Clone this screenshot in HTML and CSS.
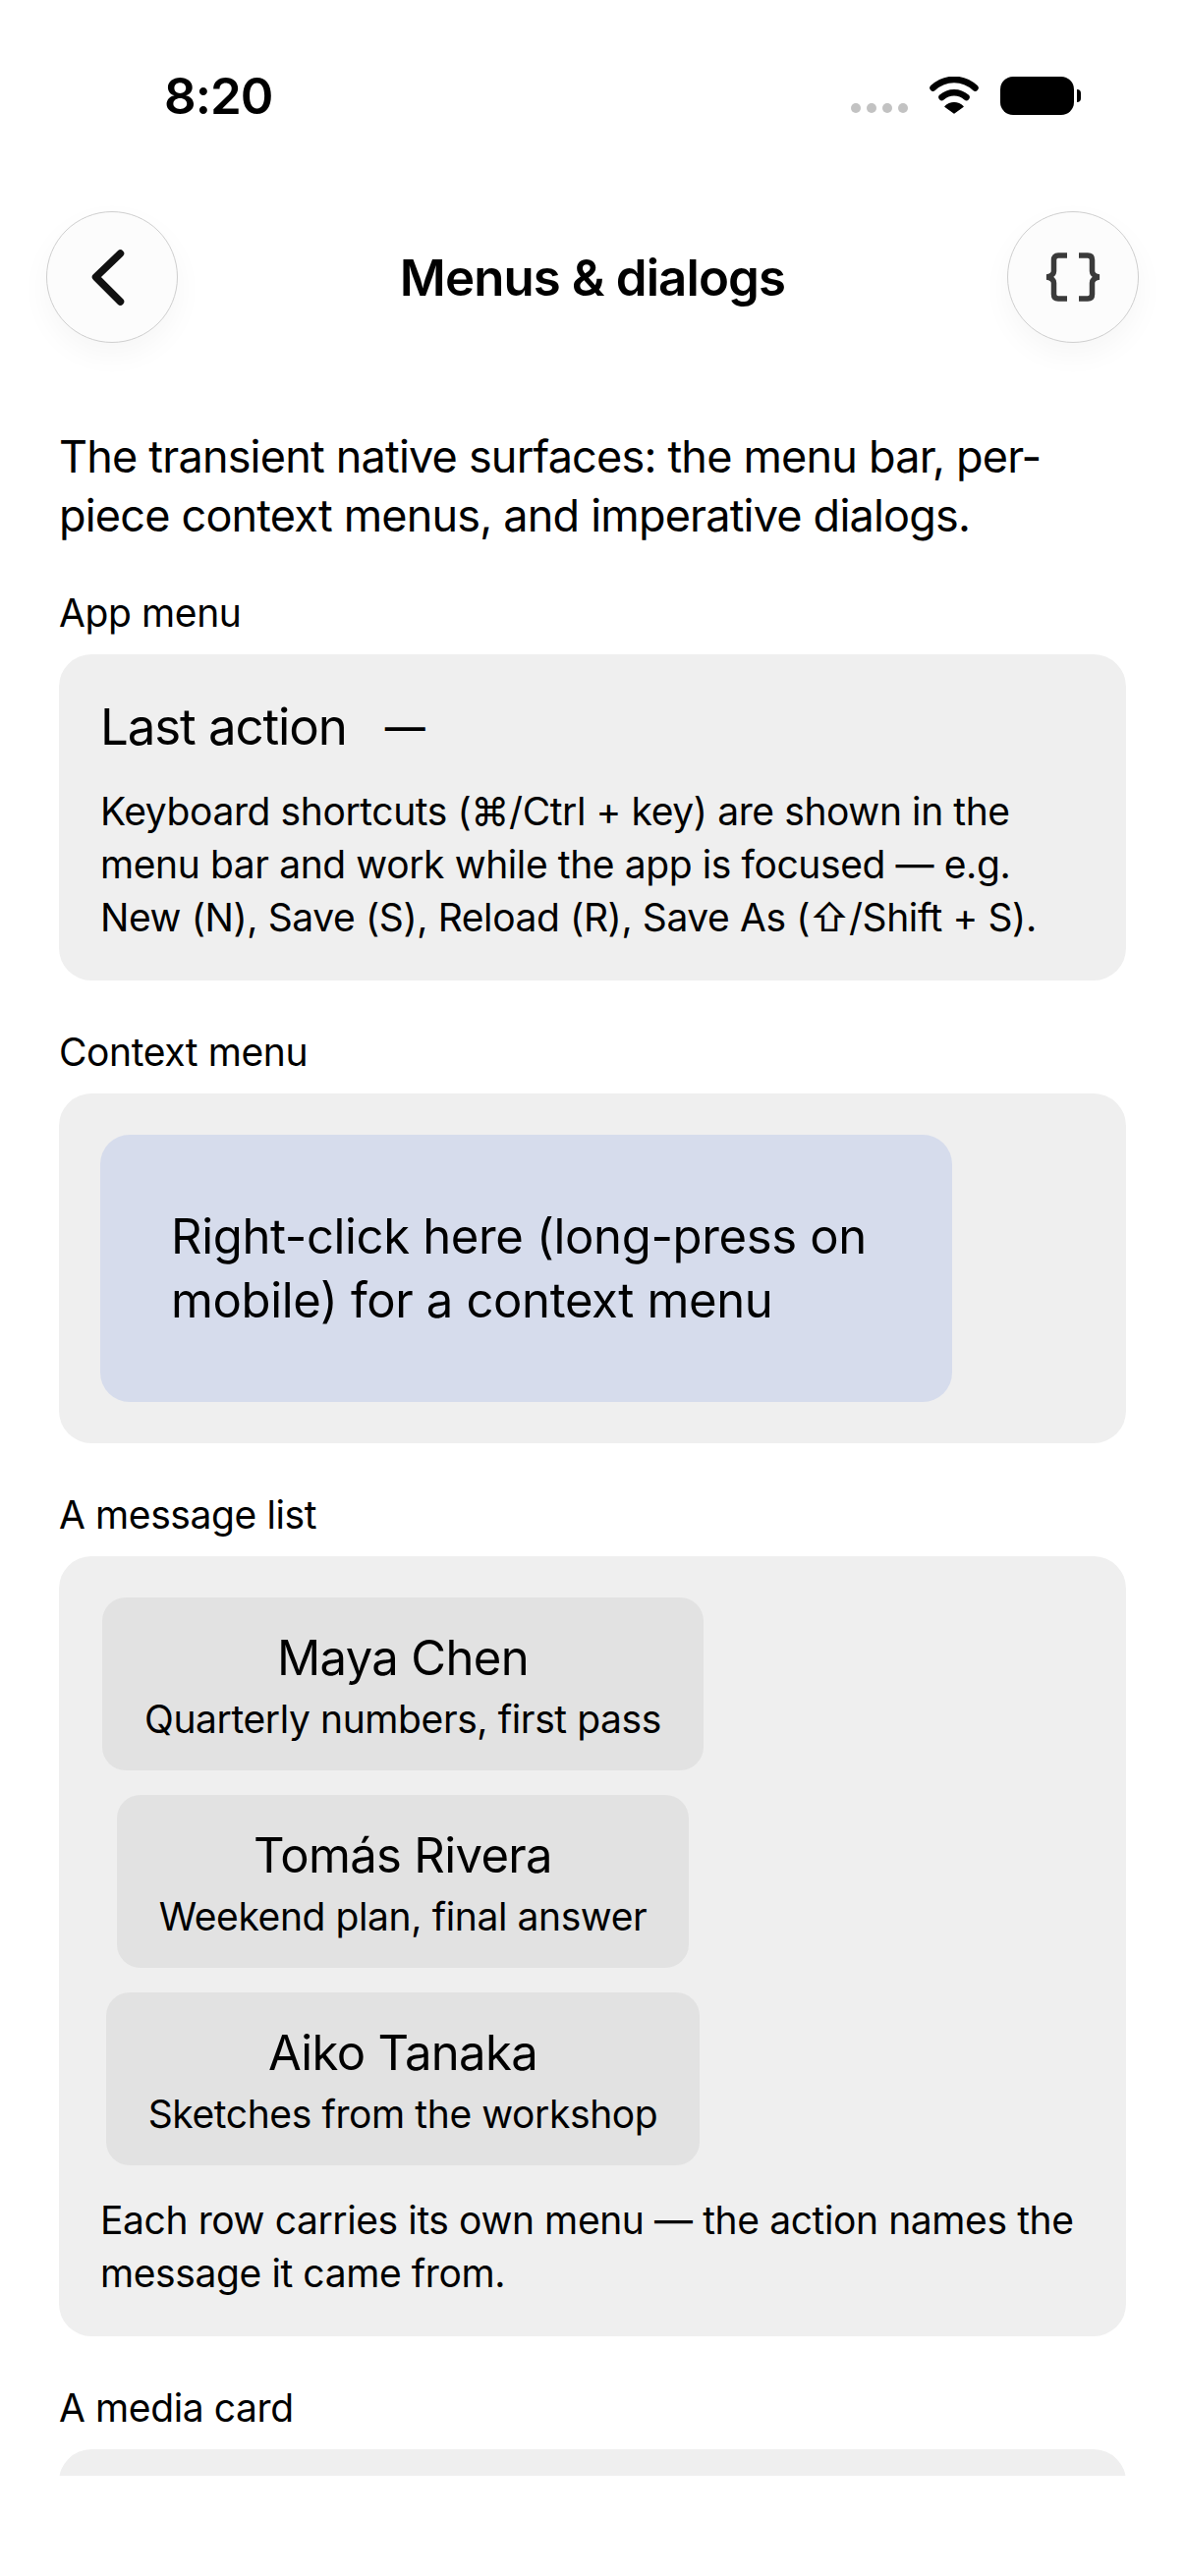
FILE: index.html
```html
<!DOCTYPE html>
<html lang="en">
  <head>
    <meta charset="utf-8" />
    <title>Menus &amp; dialogs</title>
    <link rel="stylesheet" href="styles.css">
  </head>

  <body>
    <div class="phone">
      <div class="status-bar">
        <span class="clock">8:20</span>
        <div class="status-icons">
          <div class="signal"><i></i><i></i><i></i><i></i></div>
          <svg class="wifi" width="50" height="38" viewBox="0 0 50 38">
            <path d="M3.500 11.500C16 0 34 0 46.500 11.500" fill="none" stroke="#000" stroke-width="6.500" stroke-linecap="round" />
            <path d="M12.500 21C19.500 14.700 30.500 14.700 37.500 21" fill="none" stroke="#000" stroke-width="6.500" stroke-linecap="round" />
            <path d="M25 37L16 30.500C21 25.500 29 25.500 34 30.500Z" fill="#000" stroke="#000" stroke-width="1.500" stroke-linejoin="round" />
          </svg>
          <div class="battery"><div class="battery-body"></div><div class="battery-cap"></div></div>
        </div>
      </div>

      <header class="nav">
        <button class="round-btn">
          <svg width="60" height="60" viewBox="0 0 60 60">
            <path d="M38.500 6L13.500 30L38.500 55" fill="none" stroke="#111" stroke-width="7.500" stroke-linecap="round" stroke-linejoin="round" />
          </svg>
        </button>
        <h1>Menus &amp; dialogs</h1>
        <button class="round-btn">
          <svg width="60" height="50" viewBox="0 0 60 50">
            <path d="M24 3H15C12 3 10.500 4.500 10.500 7.500V19C10.500 22 8 24 3.500 25C8 26 10.500 28 10.500 31V42.500C10.500 45.500 12 47 15 47H24" fill="none" stroke="#3a3a3a" stroke-width="5.500" />
            <path d="M36 3H45C48 3 49.500 4.500 49.500 7.500V19C49.500 22 52 24 56.500 25C52 26 49.500 28 49.500 31V42.500C49.500 45.500 48 47 45 47H36" fill="none" stroke="#3a3a3a" stroke-width="5.500" />
          </svg>
        </button>
      </header>

      <main class="content">
        <p class="intro">
          The transient native surfaces: the menu bar, per-piece context menus,
          and imperative dialogs.
        </p>

        <section class="group">
          <h2>App menu</h2>
          <div class="card">
            <div class="last-action"><span>Last action</span><span class="dash">—</span></div>
            <p class="note">
              Keyboard shortcuts (⌘/Ctrl + key) are shown in the menu bar and
              work while the app is focused — e.g. New (N), Save (S), Reload
              (R), Save As (⇧/Shift + S).
            </p>
          </div>
        </section>

        <section class="group">
          <h2>Context menu</h2>
          <div class="card">
            <div class="context-target">
              Right-click here (long-press on mobile) for a context menu
            </div>
          </div>
        </section>

        <section class="group">
          <h2>A message list</h2>
          <div class="card">
            <div class="messages">
              <div class="message">
                <div class="sender">Maya Chen</div>
                <div class="subject">Quarterly numbers, first pass</div>
              </div>
              <div class="message">
                <div class="sender">Tomás Rivera</div>
                <div class="subject">Weekend plan, final answer</div>
              </div>
              <div class="message">
                <div class="sender">Aiko Tanaka</div>
                <div class="subject">Sketches from the workshop</div>
              </div>
            </div>
            <p class="note">
              Each row carries its own menu — the action names the message it
              came from.
            </p>
          </div>
        </section>

        <section class="group">
          <h2>A media card</h2>
          <div class="card card-tall"></div>
        </section>
      </main>
    </div>
  </body>
</html>
```

FILE: styles.css
```css
html {
  font-family: Inter, "Noto Sans", "DejaVu Sans", sans-serif;
  color: #000;
}

body {
  margin: 0;
  background-color: white;
}

.phone {
  width: 1206px;
  height: 2622px;
  overflow: hidden;
}

.status-bar {
  display: flex;
  justify-content: space-between;
  align-items: center;
  height: 194px;
  padding: 0 106px 0 167px;
  box-sizing: border-box;
}

.clock {
  font-size: 51px;
  font-weight: 600;
  letter-spacing: -1px;
}

.status-icons {
  display: flex;
  align-items: center;
  gap: 22px;
}

.signal {
  display: flex;
  gap: 6px;
  margin-top: 26px;
}

.signal i {
  width: 10px;
  height: 10px;
  border-radius: 50%;
  background-color: #c2c2c2;
}

.battery {
  display: flex;
  align-items: center;
  gap: 3px;
}

.battery-body {
  width: 75px;
  height: 39px;
  border-radius: 13px;
  background-color: black;
}

.battery-cap {
  width: 4px;
  height: 13px;
  border-radius: 0 6px 6px 0;
  background-color: black;
}

.nav {
  display: flex;
  justify-content: space-between;
  align-items: center;
  height: 134px;
  padding: 21px 47px 0 47px;
}

.nav h1 {
  margin: 0;
  font-size: 51px;
  font-weight: 600;
  letter-spacing: -0.9px;
}

.round-btn {
  display: flex;
  justify-content: center;
  align-items: center;
  box-sizing: border-box;
  width: 134px;
  height: 134px;
  padding: 0;
  border: 1.500px solid #cfcfcf;
  border-radius: 50%;
  background-color: #fcfcfc;
  box-shadow: 0 12px 30px rgba(0, 0, 0, 0.04);
}

.content {
  height: 2171px;
  padding: 86px 60px 0;
  overflow: hidden;
  box-sizing: border-box;
}

.intro {
  margin: 0;
  font-size: 45px;
  line-height: 60px;
  letter-spacing: -0.8px;
}

.group {
  margin-top: 42px;
}

.group + .group {
  margin-top: 46px;
}

.group h2 {
  margin: 0 0 15px;
  font-size: 39px;
  font-weight: 400;
  line-height: 54px;
  letter-spacing: -0.4px;
}

.card {
  padding: 42px;
  border-radius: 33px;
  background-color: #efefef;
}

.card-tall {
  height: 400px;
}

.last-action {
  display: flex;
  align-items: center;
  gap: 39px;
  font-size: 51px;
  line-height: 64px;
  letter-spacing: -1.1px;
}

.dash {
  font-size: 41px;
  font-weight: 500;
  letter-spacing: 0;
}

.note {
  margin: 27px 0 -5px;
  font-size: 39px;
  line-height: 54px;
  letter-spacing: -0.4px;
}

.messages + .note {
  margin-top: 29px;
}

.context-target {
  box-sizing: border-box;
  width: 867px;
  padding: 71px 72px;
  border-radius: 30px;
  background-color: #d6dcec;
  font-size: 49px;
  line-height: 65px;
  letter-spacing: -0.35px;
}

.messages {
  display: flex;
  flex-direction: column;
  align-items: center;
  width: 616px;
  gap: 25px;
}

.message {
  padding: 27px 43px 25px;
  border-radius: 24px;
  background-color: #e2e2e2;
  text-align: center;
}

.sender {
  font-size: 49px;
  line-height: 70px;
  letter-spacing: -0.65px;
}

.subject {
  font-size: 39px;
  line-height: 54px;
  letter-spacing: -0.4px;
}
```
